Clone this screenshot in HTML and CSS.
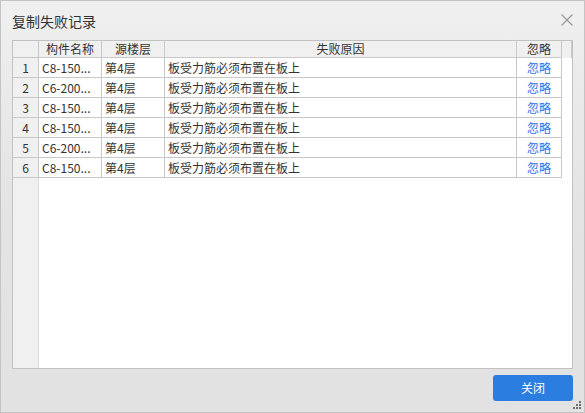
FILE: index.html
```html
<!DOCTYPE html>
<html lang="zh-CN">
<head>
<meta charset="utf-8">
<title>复制失败记录</title>
<link rel="stylesheet" href="styles.css">
</head>
<body>
<div class="window">
  <div class="titlebar">
    <span class="title">复制失败记录</span>
    <svg class="close" width="12" height="12" viewBox="0 0 12 12"><path d="M0.5 0.5 L11.5 11.5 M11.5 0.5 L0.5 11.5" stroke="#9a9a9a" stroke-width="1.2" fill="none"/></svg>
  </div>
  <div class="frame">
    <div class="rownums">
      <div class="rn rn-head"></div>
      <div class="rn">1</div>
      <div class="rn">2</div>
      <div class="rn">3</div>
      <div class="rn">4</div>
      <div class="rn">5</div>
      <div class="rn">6</div>
    </div>
    <div class="grid">
      <div class="row head">
        <div class="c c1 center">构件名称</div>
        <div class="c c2 center">源楼层</div>
        <div class="c c3 center">失败原因</div>
        <div class="c c4 center">忽略</div>
        <div class="fill"></div>
      </div>
      <div class="row">
        <div class="c c1">C8-150...</div>
        <div class="c c2">第4层</div>
        <div class="c c3">板受力筋必须布置在板上</div>
        <div class="c c4 center link">忽略</div>
      </div>
      <div class="row">
        <div class="c c1">C6-200...</div>
        <div class="c c2">第4层</div>
        <div class="c c3">板受力筋必须布置在板上</div>
        <div class="c c4 center link">忽略</div>
      </div>
      <div class="row">
        <div class="c c1">C8-150...</div>
        <div class="c c2">第4层</div>
        <div class="c c3">板受力筋必须布置在板上</div>
        <div class="c c4 center link">忽略</div>
      </div>
      <div class="row">
        <div class="c c1">C8-150...</div>
        <div class="c c2">第4层</div>
        <div class="c c3">板受力筋必须布置在板上</div>
        <div class="c c4 center link">忽略</div>
      </div>
      <div class="row">
        <div class="c c1">C6-200...</div>
        <div class="c c2">第4层</div>
        <div class="c c3">板受力筋必须布置在板上</div>
        <div class="c c4 center link">忽略</div>
      </div>
      <div class="row">
        <div class="c c1">C8-150...</div>
        <div class="c c2">第4层</div>
        <div class="c c3">板受力筋必须布置在板上</div>
        <div class="c c4 center link">忽略</div>
      </div>
    </div>
  </div>
  <div class="footer">
    <button class="btn">关闭</button>
  </div>
  <svg class="grip" width="8" height="8" viewBox="0 0 8 8">
    <rect x="6" y="0" width="2" height="2" fill="#6e6e6e"/>
    <rect x="3" y="3" width="2" height="2" fill="#6e6e6e"/>
    <rect x="6" y="3" width="2" height="2" fill="#6e6e6e"/>
    <rect x="0" y="6" width="2" height="2" fill="#6e6e6e"/>
    <rect x="3" y="6" width="2" height="2" fill="#6e6e6e"/>
    <rect x="6" y="6" width="2" height="2" fill="#6e6e6e"/>
  </svg>
</div>
</body>
</html>
```

FILE: styles.css
```css
* {
  box-sizing: border-box;
}

html, body {
  margin: 0;
  padding: 0;
}

body {
  font-family: "Noto Sans CJK SC", "Noto Sans", sans-serif;
  color: #333;
}

.window {
  position: relative;
  width: 585px;
  height: 413px;
  border: 1px solid #c4c4c4;
  background: linear-gradient(to bottom, #f0f0f0 0px, #ececec 60px, #e4e4e4 200px, #e2e2e2 100%);
  display: flex;
  flex-direction: column;
}

.titlebar {
  height: 39px;
  flex: none;
  display: flex;
  align-items: center;
  justify-content: space-between;
  padding: 0 11px 0 11px;
}

.title {
  font-size: 14px;
  line-height: 16px;
  color: #333;
}

.close {
  display: block;
  margin-top: -1px;
}

.frame {
  flex: none;
  margin-left: 11px;
  width: 561px;
  height: 329px;
  border: 1px solid #c2c2c2;
  background: #fff;
  display: flex;
}

.rownums {
  width: 26px;
  flex: none;
  background: linear-gradient(to right, #f0f0f0 25px, #dedede 25px);
}

.rn {
  width: 26px;
  height: 20px;
  border-right: 1px solid #c8c8c8;
  border-bottom: 1px solid #c8c8c8;
  font-size: 12px;
  line-height: 19px;
  text-align: center;
  color: #333;
}

.rn-head {
  height: 17px;
}

.grid {
  flex: 1;
  display: flex;
  flex-direction: column;
}

.row {
  display: flex;
  height: 20px;
}

.row.head {
  height: 17px;
  background: #f0f0f0;
}

.c {
  height: 100%;
  border-right: 1px solid #c8c8c8;
  border-bottom: 1px solid #c8c8c8;
  font-size: 12px;
  line-height: 19px;
  padding-left: 3px;
  white-space: nowrap;
  overflow: hidden;
  color: #333;
}

.head .c {
  line-height: 16px;
}

.center {
  text-align: center;
  padding-left: 0;
}

.c1 { width: 63px; }
.c2 { width: 63px; }
.c3 { width: 352px; }
.c4 { width: 45px; }

.fill {
  flex: 1;
  border-right: 1px solid #c8c8c8;
}

.link {
  color: #2a72ea;
}

.footer {
  flex: none;
  display: flex;
  justify-content: flex-end;
  padding: 6px 11px 0 0;
}

.btn {
  width: 80px;
  height: 26px;
  border: none;
  border-radius: 3px;
  background: #2b7de0;
  color: #fff;
  font-family: "Noto Sans CJK SC", "Noto Sans", sans-serif;
  font-size: 12px;
  line-height: 26px;
  padding: 0;
}

.grip {
  position: absolute;
  right: 3px;
  bottom: 3px;
}
```
